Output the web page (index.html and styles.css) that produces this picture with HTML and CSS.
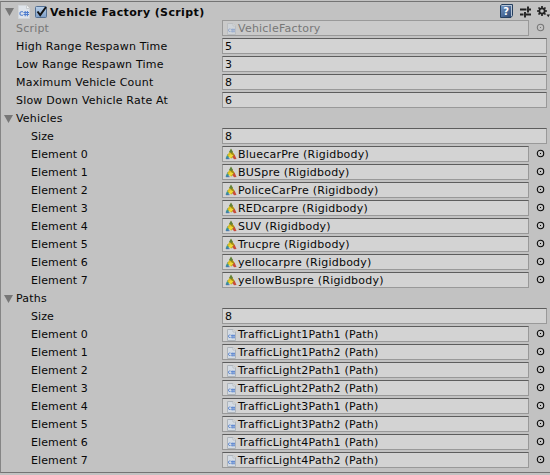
FILE: index.html
```
<!DOCTYPE html>
<html lang="en">
<head>
<meta charset="utf-8">
<title>Vehicle Factory</title>
<link rel="stylesheet" href="styles.css">
</head>
<body>
<svg class="defs" width="0" height="0" aria-hidden="true">
  <defs>
    <linearGradient id="box" x2="0" y2="1"><stop offset="0" stop-color="#b9d0e9"/><stop offset="1" stop-color="#7c9dc6"/></linearGradient>
    <linearGradient id="book" x2="1" y2="1"><stop offset="0" stop-color="#7195c4"/><stop offset="1" stop-color="#2d4770"/></linearGradient>
    <symbol id="cs" viewBox="0 0 12 14">
      <path d="M.5.5h8l3 3v10H.5z" fill="#dfe4ea" stroke="#d2d6da"/>
      <path d="M8.500.5v3h3" fill="#f4f4f4" stroke="#c8ccd0"/>
      <path d="M5 6.700H3L2 7.700v1.600l1 1h2M5.500 7.500H11M5.500 9.500H11M7.200 6v5.200M9.400 6v5.200" fill="none" stroke="#4f7dce" stroke-width="1.100"/>
    </symbol>
    <symbol id="doc" viewBox="0 0 9 12">
      <path d="M.5.5h5.500L8.500 3v8.500h-8z" fill="#d5dce4" stroke="#aeb4ba"/>
      <path d="M6 .5V3h2.500" fill="#eee" stroke="#b9bec3"/>
      <path d="M3.500 6H2L1.500 6.500v1.500l.5.5h1.500M4 6.500h4M4 8.200h4M5.200 5.500v4M7 5.500v4" fill="none" stroke="#6089d0" stroke-width=".9"/>
    </symbol>
    <symbol id="body" viewBox="0 0 12 12">
      <path d="M.5 10.500L2.500 6l2 2L3 11z" fill="#399197"/>
      <path d="M6 1.500L9.800 7.500 6 10.500 2.200 7.500z" fill="#d8bc1e"/>
      <path d="M6 1.500L9.800 7.500 6 10.500z" fill="#a58d16"/>
      <path d="M3.500 8L6 6l2.500 1.500L6 10z" fill="#f0d936"/>
      <path d="M7.500 9l2-2.500 2 4.500-2.500.3z" fill="#c94b39"/>
      <path d="M4 4L6 .5 8 4 6 5z" fill="#62813a"/>
      <path d="M1 10.700h3.500" stroke="#4173ad"/>
    </symbol>
    <symbol id="pick" viewBox="0 0 9 9">
      <circle cx="4.500" cy="4.500" r="3.200" fill="none" stroke="currentColor" stroke-width="1.100"/>
      <rect x="4" y="4" width="1" height="1" fill="currentColor"/>
    </symbol>
  </defs>
</svg>
<main class="panel" id="panel">
  <header class="head">
    <i class="fold"></i>
    <svg class="file" viewBox="0 0 12 14"><use href="#cs"/></svg>
    <svg class="check" viewBox="0 0 13 13">
      <rect x=".5" y=".5" width="11" height="11" rx="1" fill="url(#box)" stroke="#536f92"/>
      <path d="M2.500 5.500L5.200 9 11 1" fill="none" stroke="#111" stroke-width="2"/>
    </svg>
    <h1>Vehicle Factory (Script)</h1>
    <svg class="help" viewBox="0 0 13 14">
      <path d="M.5 1.500L2 .5h10.500v11L11 13.500H.5z" fill="#b5c3d5" stroke="#26405f"/>
      <path d="M1 2h10v11H1z" fill="url(#book)"/>
      <text x="6.200" y="11" text-anchor="middle">?</text>
    </svg>
    <svg class="preset" viewBox="0 0 11 12">
      <path d="M0 3.500h6.500M9 3.500h2M8 .5v6M0 8.500h3.500M6 8.500h5M5 6v5.500" fill="none" stroke="#222" stroke-width="1.900"/>
    </svg>
    <svg class="gear" viewBox="0 0 13 12">
      <circle cx="5" cy="5" r="2.700" fill="none" stroke="#222" stroke-width="1.800"/>
      <path d="M5 0v2M5 8v2M0 5h2M8 5h2M1.500 1.500l1.400 1.400M7.100 7.100l1.400 1.400M8.500 1.500L7.100 2.900M2.900 7.100L1.500 8.500" stroke="#222" stroke-width="1.700"/>
      <path d="M9.500 8.500H13l-1.700 2.800z" fill="#222"/>
    </svg>
  </header>
</main>
<script src="inspector.js"></script>
</body>
</html>
```
FILE: styles.css
```
* { box-sizing: border-box; }
body {
  margin: 0;
  height: 475px;
  overflow: hidden;
  background: #c2c2c2;
  color: #080808;
  font: 11px/16px "DejaVu Sans", sans-serif;
  letter-spacing: .2px;
}
.defs { display: block; height: 0; }
.panel {
  height: 472px;
  margin-top: 1px;
  border-top: 1px solid #747474;
  border-bottom: 1px solid #747474;
  border-left: 1px solid #858585;
  padding-left: 1px;
}
.head { display: flex; height: 18px; align-items: center; padding-left: 3px; }
.fold {
  width: 9px;
  height: 8px;
  background: #777;
  clip-path: polygon(0 0, 100% 0, 50% 100%);
}
.head .fold { margin-top: 2px; }
.file { width: 12px; height: 14px; margin: 1px 0 0 4px; }
.check { width: 13px; height: 13px; margin: 3px 0 0 5px; }
h1 {
  margin: 3px auto 0 2px;
  font-size: 11px;
  line-height: 16px;
  font-weight: bold;
  letter-spacing: .38px;
  white-space: nowrap;
}
.help { width: 13px; height: 14px; }
.help text { fill: #fff; font-size: 10px; font-weight: bold; letter-spacing: 0; }
.preset { width: 11px; height: 12px; margin: 2px 0 0 7px; }
.gear { width: 13px; height: 12px; margin: 1px 0 0 6px; }
.row { display: flex; height: 18px; }
.label {
  display: flex;
  align-items: center;
  width: 220px;
  height: 18px;
  padding-left: 14px;
  white-space: nowrap;
}
.child .label { padding-left: 29px; letter-spacing: .1px; }
.group .label { padding-left: 2px; }
.group .fold { margin-right: 3px; }
.field {
  display: flex;
  align-items: center;
  width: 325px;
  height: 16px;
  padding-left: 2px;
  background: #d3d3d3;
  border: 1px solid #999;
  border-top-color: #5d5d5d;
  white-space: nowrap;
}
.field span { padding-top: 2px; }
.object .field { width: 307px; letter-spacing: .22px; }
.field svg { width: 12px; height: 12px; margin: 0 1px 0 0; }
.object .field svg.doc { width: 9px; height: 12px; margin: 1px 2px 0 2px; }
.pick { width: 9px; height: 9px; margin: 3px 0 0 7px; }
.disabled { color: #777; }
.disabled .field { background: #cacaca; border-color: #999; }
.object.disabled .field svg.doc { opacity: .5; }
```
FILE: inspector.js
```
const panel = document.getElementById("panel");

function addRow(kind, label, value, icon) {
  const row = document.createElement("div");
  row.className = "row " + kind;
  let html = '<div class="label">' + (value === undefined ? '<i class="fold"></i>' : "") + "<span>" + label + "</span></div>";
  if (value !== undefined) {
    const art = icon === "body" ? '<svg viewBox="0 0 12 12"><use href="#body"/></svg>'
      : icon === "doc" ? '<svg class="doc" viewBox="0 0 9 12"><use href="#doc"/></svg>' : "";
    html += '<div class="field">' + art + "<span>" + value + "</span></div>";
    if (icon) html += '<svg class="pick" viewBox="0 0 9 9"><use href="#pick"/></svg>';
  }
  row.innerHTML = html;
  panel.append(row);
}

addRow("object disabled", "Script", "VehicleFactory", "doc");
addRow("", "High Range Respawn Time", "5");
addRow("", "Low Range Respawn Time", "3");
addRow("", "Maximum Vehicle Count", "8");
addRow("", "Slow Down Vehicle Rate At", "6");

addRow("group", "Vehicles");
addRow("child", "Size", "8");
["BluecarPre", "BUSpre", "PoliceCarPre", "REDcarpre", "SUV", "Trucpre", "yellocarpre", "yellowBuspre"]
  .forEach((name, i) => addRow("child object", "Element " + i, name + " (Rigidbody)", "body"));

addRow("group", "Paths");
addRow("child", "Size", "8");
for (let i = 0; i < 8; i++) {
  const name = "TrafficLight" + (Math.floor(i / 2) + 1) + "Path" + (i % 2 + 1);
  addRow("child object", "Element " + i, name + " (Path)", "doc");
}
```
